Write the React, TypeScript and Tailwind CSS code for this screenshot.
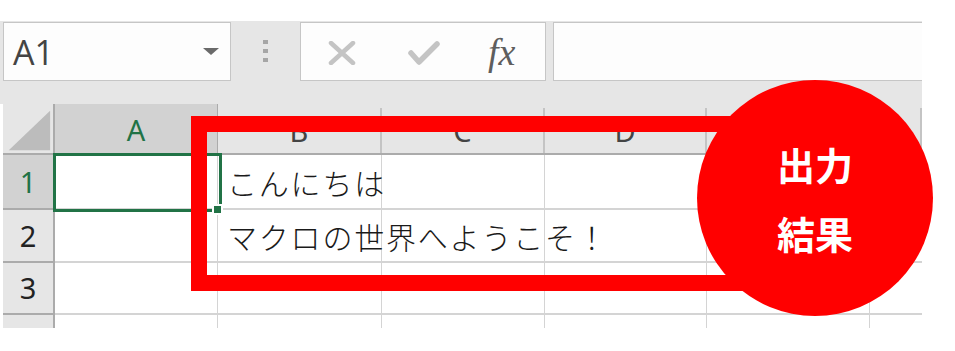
import React from 'react';

// column E's letter sits fully under the red badge, so it is left blank
const cols = ['A', 'B', 'C', 'D', '', ''];
const rows = [
  { n: '1', h: 'h-[55px]', text: 'こんにちは' },
  { n: '2', h: 'h-[53px]', text: 'マクロの世界へようこそ！' },
  { n: '3', h: 'h-[52px]', text: '' },
];

export default function App() {
  return (
    <div className="relative w-[955px] h-[351px] bg-white overflow-hidden font-['Noto_Sans',sans-serif]">
      <div className="h-[21px]" />

      {/* Toolbar: name box + formula bar */}
      <div className="w-[922px] h-[83px] bg-[#e6e6e6] flex items-start pt-px">
        <div className="ml-[3px] w-[228px] h-[59px] bg-[#fdfdfd] border border-[#c6c6c6] flex items-center justify-between pl-[9px] pr-[11px]">
          <span className="text-[34px] leading-none text-[#444] font-['Open_Sans',sans-serif]">A1</span>
          <svg width="16" height="8" viewBox="0 0 16 8">
            <polygon points="0,0 16,0 8,7" fill="#6a6a6a" />
          </svg>
        </div>
        <div className="w-[69px] h-[59px] flex flex-col items-center justify-center gap-[5px] pb-[2px]">
          <div className="w-[5px] h-[4px] bg-[#a6a6a6]" />
          <div className="w-[5px] h-[4px] bg-[#a6a6a6]" />
          <div className="w-[5px] h-[4px] bg-[#a6a6a6]" />
        </div>
        <div className="w-[246px] h-[59px] bg-[#fdfdfd] border border-[#c6c6c6] flex items-center pl-[27px]">
          <svg width="28" height="24" viewBox="0 0 28 24" className="mt-[2px]">
            <path d="M3 2 L25 22 M25 2 L3 22" stroke="#c4c4c4" strokeWidth="4.5" strokeLinecap="round" />
          </svg>
          <svg width="32" height="24" viewBox="0 0 32 24" className="ml-[52px] mt-[2px]">
            <path d="M3 12 L11 21 L29 3" stroke="#c4c4c4" strokeWidth="5.5" fill="none" strokeLinecap="round" strokeLinejoin="round" />
          </svg>
          <span className="ml-[48px] text-[38px] leading-none italic text-[#5e5e5e] font-['Liberation_Serif',serif]">fx</span>
        </div>
        <div className="ml-[7px] flex-1 h-[59px] bg-[#fdfdfd] border border-r-0 border-[#c6c6c6]" />
      </div>

      {/* Grid */}
      <div className="ml-[3px] w-[919px] grid grid-cols-[52px_163px_164px_163px_162px_163px_52px]">
        {/* header row */}
        <div className="h-[51px] bg-[#e6e6e6] border-r-2 border-b-2 border-[#ababab] flex items-end justify-end">
          <svg width="52" height="49" viewBox="0 0 52 49">
            <polygon points="49,6 49,47 6,47" fill="#bcbcbc" />
          </svg>
        </div>
        {cols.map((c, i) => (
          <div
            key={i}
            className={
              i === 0
                ? 'h-[51px] bg-[#d2d2d2] border-r border-b-2 border-[#ababab] flex items-center justify-center text-[29px] text-[#217346]'
                : 'h-[51px] bg-[#e6e6e6] border-b-2 border-[#ababab] flex items-end justify-center text-[29px] text-[#444]'
            }
          >
            <div className={i === 0 ? 'flex-1 text-center pt-[2px]' : 'flex-1 h-[45px] flex items-center justify-center border-r-2 border-[#c4c4c4]'}>
              {c}
            </div>
          </div>
        ))}

        {rows.map((r) => (
          <React.Fragment key={r.n}>
            <div
              className={`${r.h} border-r-2 border-b-2 border-[#ababab] flex items-center justify-center text-[29px] ${
                r.n === '1' ? 'bg-[#d2d2d2] text-[#217346]' : 'bg-[#e6e6e6] text-[#222]'
              }`}
            >
              {r.n}
            </div>
            <div className={`${r.h} border-r border-b-2 border-[#d4d4d4]`} />
            <div className={`${r.h} col-span-3 border-b-2 border-[#d4d4d4] relative grid grid-cols-[164px_163px_162px]`}>
              <div className="border-r border-[#d4d4d4]" />
              <div className="border-r border-[#d4d4d4]" />
              <div className="border-r border-[#d4d4d4]" />
              {r.text && (
                <span className="absolute left-[9px] top-1/2 -translate-y-1/2 whitespace-nowrap text-[30px] leading-none tracking-[1.8px] text-[#1a1a1a] font-['Noto_Sans_CJK_JP','Noto_Sans',sans-serif] font-light">
                  {r.text}
                </span>
              )}
            </div>
            <div className={`${r.h} border-r border-b-2 border-[#d4d4d4]`} />
            <div className={`${r.h} border-b-2 border-[#d4d4d4]`} />
          </React.Fragment>
        ))}

        <div className="h-[13px] bg-[#e6e6e6] border-r-2 border-[#ababab]" />
        <div className="h-[13px] border-r border-[#d4d4d4]" />
        <div className="h-[13px] border-r border-[#d4d4d4]" />
        <div className="h-[13px] border-r border-[#d4d4d4]" />
        <div className="h-[13px] border-r border-[#d4d4d4]" />
        <div className="h-[13px] border-r border-[#d4d4d4]" />
        <div className="h-[13px]" />
      </div>

      {/* Active cell selection */}
      <div className="absolute left-[53px] top-[153px] w-[169px] h-[59px] border-[3px] border-[#217346]" />
      <div className="absolute left-[212px] top-[204px] w-[11px] h-[11px] bg-[#217346] border-2 border-white" />

      {/* Red annotation frame */}
      <div className="absolute left-[191px] top-[116px] w-[580px] h-[175px] border-[16px] border-[#ff0000]" />

      {/* Red circle badge */}
      <div className="absolute left-[697px] top-[80px] w-[236px] h-[236px] rounded-full bg-[#ff0000] flex flex-col items-center justify-center gap-[31px] text-white text-[38px] leading-none font-bold font-['Noto_Sans_CJK_JP',sans-serif]">
        <span>出力</span>
        <span>結果</span>
      </div>
    </div>
  );
}
